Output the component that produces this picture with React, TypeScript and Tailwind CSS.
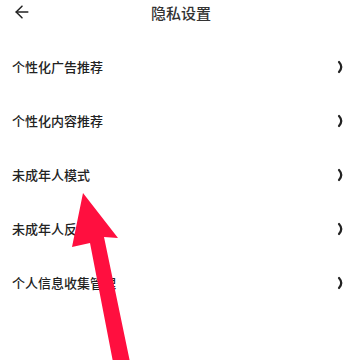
import { ArrowLeft } from "lucide-react";

const items = [
  "个性化广告推荐",
  "个性化内容推荐",
  "未成年人模式",
  "未成年人反馈",
  "个人信息收集管理",
];

function Chevron() {
  return (
    <svg width="8" height="14" viewBox="0 0 8 14" fill="none">
      <path
        d="M2 2 Q6.5 7 2 12"
        stroke="#222"
        strokeWidth="2.2"
        strokeLinecap="round"
      />
    </svg>
  );
}

export default function App() {
  return (
    <div
      className="relative w-[360px] h-[360px] overflow-hidden bg-white"
      style={{ fontFamily: '"Noto Sans CJK SC", "Noto Sans", sans-serif' }}
    >
      <div className="relative flex h-6 items-center justify-center">
        <ArrowLeft
          className="absolute left-[12px] top-[2px] text-[#222]"
          size={20}
          strokeWidth={1.8}
        />
        <span className="ml-[2px] text-[15px] font-medium leading-none text-[#333]">
          隐私设置
        </span>
      </div>
      <ul className="mt-4">
        {items.map((label) => (
          <li
            key={label}
            className="flex h-[54px] items-center justify-between pl-3 pr-[15px]"
          >
            <span className="text-[13px] font-medium text-[#222]">{label}</span>
            <Chevron />
          </li>
        ))}
      </ul>
      <svg
        className="absolute inset-0 pointer-events-none"
        width="360"
        height="360"
        viewBox="0 0 360 360"
      >
        <polygon
          points="83,193 118,238 104,237 130,362 113,362 90,243 72,247"
          fill="#ff0f3f"
        />
      </svg>
    </div>
  );
}
